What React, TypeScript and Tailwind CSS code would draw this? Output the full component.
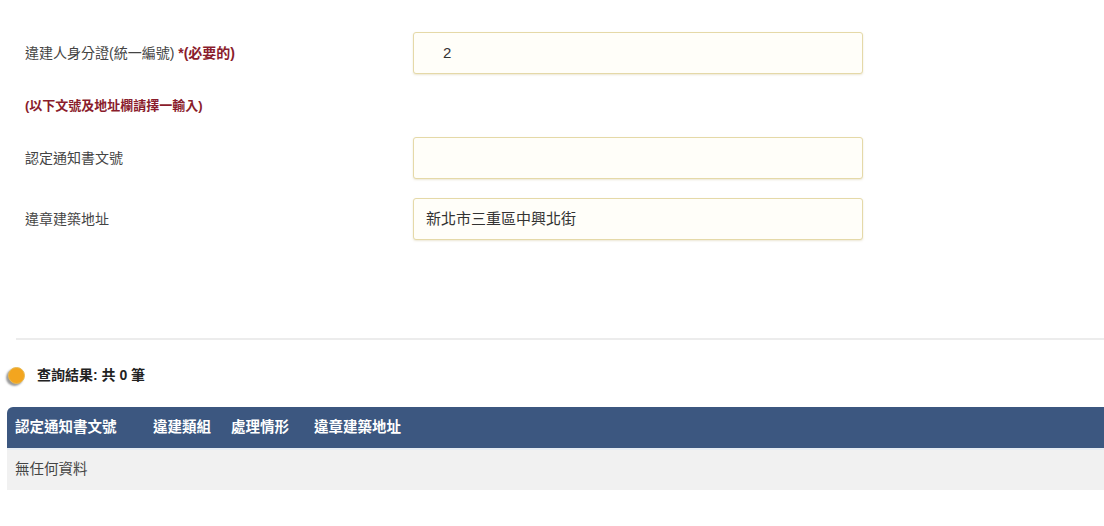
const font = {
  fontFamily: '"Liberation Sans", "Noto Sans CJK TC", sans-serif',
};

const Field = ({ label, value, children }: { label?: React.ReactNode; value?: string; children?: React.ReactNode }) => (
  <div className="flex items-center h-[42px]">
    <div className="w-[413px] pl-[25px] text-[14px] text-[#444]">{label}</div>
    <div className="w-[450px] h-[42px] rounded-[3px] border border-[#e5d9a8] bg-[#fffef9] shadow-[0_1px_2px_rgba(180,160,90,0.25)] flex items-center px-[12px] text-[15px] text-[#333]">
      {children ?? value}
    </div>
  </div>
);

export default function App() {
  return (
    <div className="w-[1104px] h-[526px] bg-white overflow-hidden" style={font}>
      <div className="pt-[32px]">
        <Field
          label={
            <>
              違建人身分證(統一編號){" "}
              <span className="text-[#8a1c2c] font-bold">*(必要的)</span>
            </>
          }
        >
          <span className="pl-[17px]">2</span>
        </Field>

        <div className="pl-[25px] h-[63px] flex items-center text-[13px] font-bold text-[#8a1c2c]">
          (以下文號及地址欄請擇一輸入)
        </div>

        <Field label="認定通知書文號" value="" />
        <div className="h-[19px]" />
        <Field label="違章建築地址" value="新北市三重區中興北街" />
      </div>

      <div className="ml-[16px] mt-[98px] h-[2px] bg-[#ececec]" />

      <div className="flex items-center gap-[12px] pl-[8px] mt-[26px] h-[18px]">
        <span className="w-[17px] h-[17px] rounded-full bg-[#f3a51f] border border-[#e8bb55] shadow-[-2px_2px_2px_rgba(0,0,0,0.4)]" />
        <span className="text-[14px] font-bold text-[#222]">查詢結果: 共 0 筆</span>
      </div>

      <div className="ml-[7px] mt-[23px]">
        <div className="h-[41px] bg-[#3c5780] rounded-tl-[6px] flex items-center text-white text-[14.5px] font-bold">
          <span className="pl-[8px] w-[146px]">認定通知書文號</span>
          <span className="w-[78px]">違建類組</span>
          <span className="w-[83px]">處理情形</span>
          <span>違章建築地址</span>
        </div>
        <div className="h-[2px] bg-[#e6ecf3]" />
        <div className="h-[40px] bg-[#f1f1f1] flex items-center pl-[8px] text-[14.5px] text-[#444]">
          無任何資料
        </div>
      </div>
    </div>
  );
}
